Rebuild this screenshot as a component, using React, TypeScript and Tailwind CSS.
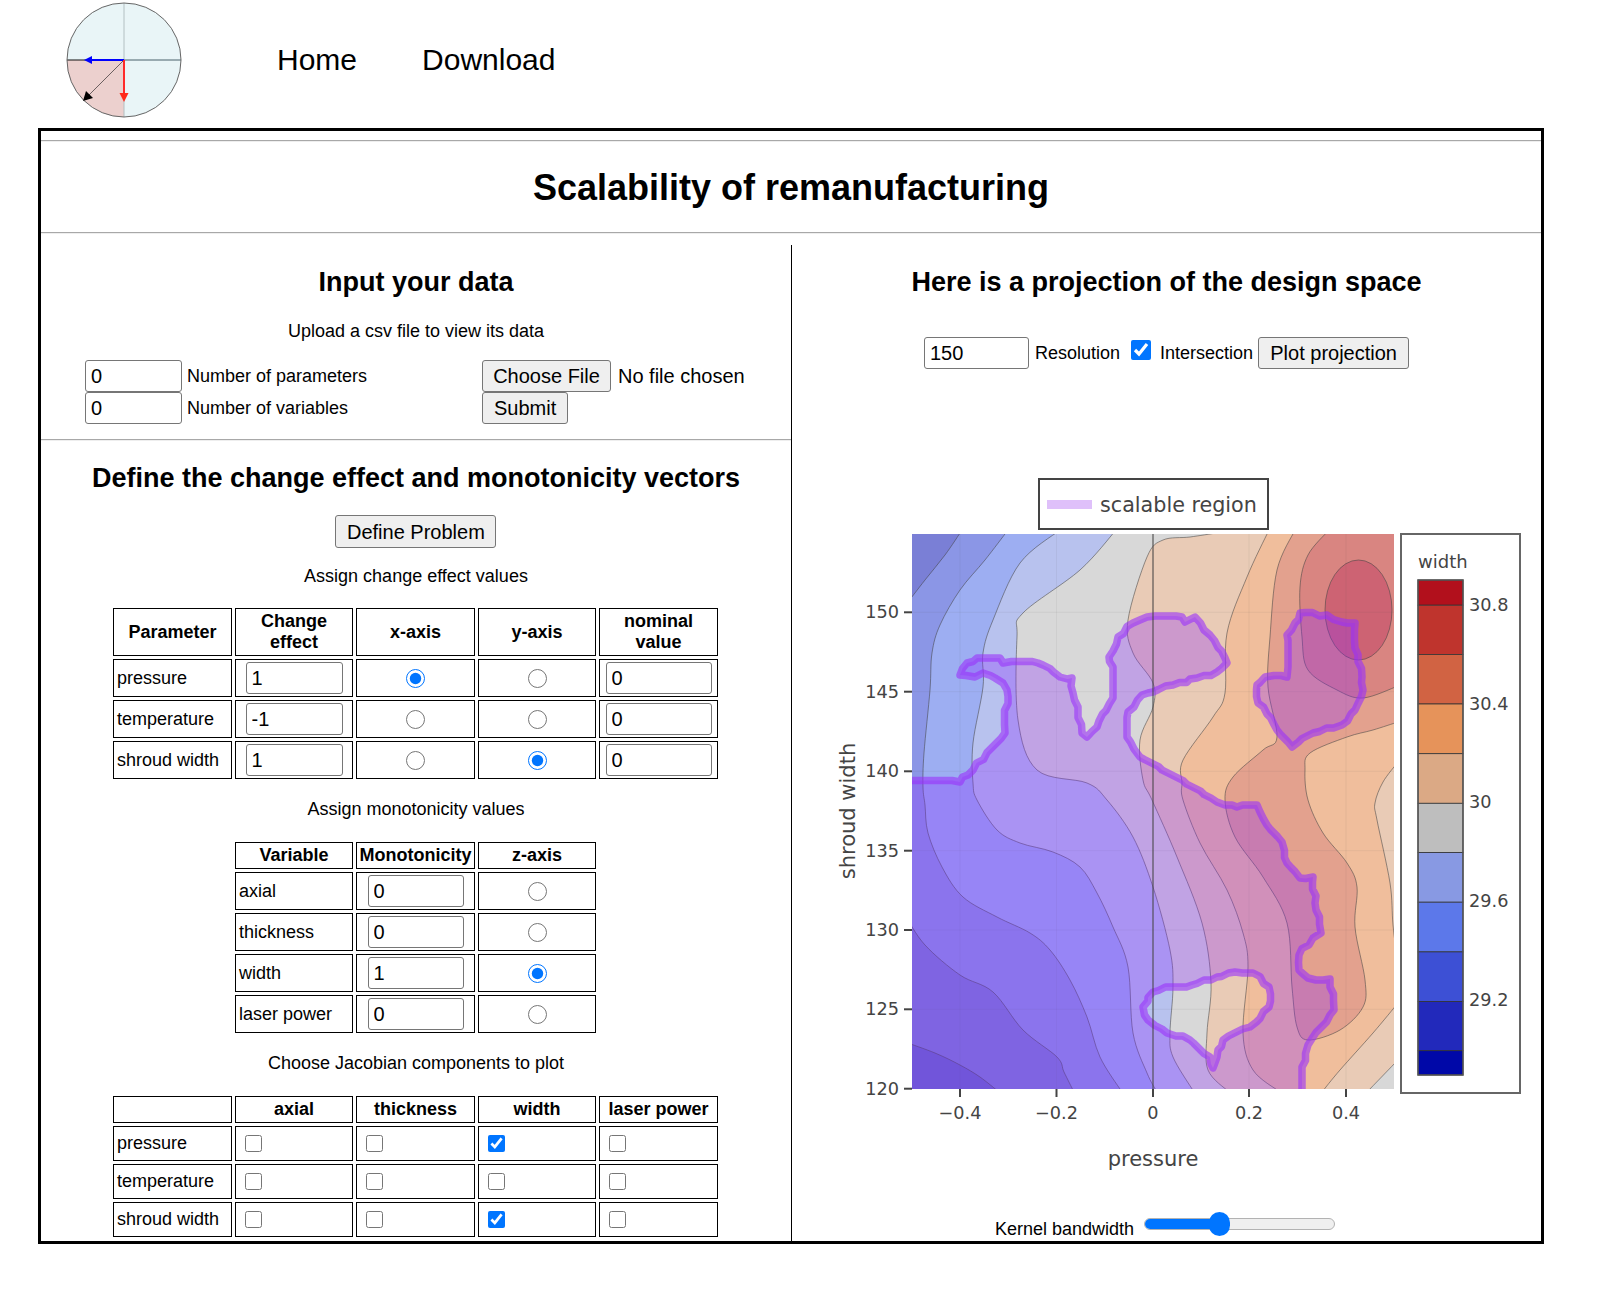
import React from "react";

type Pt = [number, number];

const inputCls = "block border border-[#767676] rounded-[3px] px-[5px] text-[20px] h-[32px] bg-white text-black";
const btnCls = "block border border-[#767676] rounded-[3px] bg-[#efefef] text-[20px] h-[32px] px-[11px] text-black whitespace-nowrap";
const thCls = "border border-black font-bold text-center leading-[21px] p-0";
const tdCls = "border border-black p-0 px-[3px]";

// smooth line through the points (catmull-rom)
function curve(p: Pt[], move = true) {
  let d = move ? `M${p[0][0]} ${p[0][1]}` : `L${p[0][0]} ${p[0][1]}`;
  for (let i = 0; i < p.length - 1; i++) {
    const a = p[Math.max(i - 1, 0)];
    const b = p[i];
    const c = p[i + 1];
    const e = p[Math.min(i + 2, p.length - 1)];
    const c1x = b[0] + (c[0] - a[0]) / 6;
    const c1y = b[1] + (c[1] - a[1]) / 6;
    const c2x = c[0] - (e[0] - b[0]) / 6;
    const c2y = c[1] - (e[1] - b[1]) / 6;
    d += ` C${c1x.toFixed(1)} ${c1y.toFixed(1)} ${c2x.toFixed(1)} ${c2y.toFixed(1)} ${c[0]} ${c[1]}`;
  }
  return d;
}

// the region outline comes from a coarse grid in the plot, so it steps a little
function rough(p: Pt[]) {
  const out: string[] = [];
  const grid = 3.5;
  for (let i = 0; i < p.length; i++) {
    const a = p[i];
    const b = p[(i + 1) % p.length];
    const n = Math.max(1, Math.round(Math.hypot(b[0] - a[0], b[1] - a[1]) / 7));
    for (let k = 0; k < n; k++) {
      const x = a[0] + ((b[0] - a[0]) * k) / n;
      const y = a[1] + ((b[1] - a[1]) * k) / n;
      const sx = k === 0 ? x : Math.round(x / grid) * grid;
      const sy = k === 0 ? y : Math.round(y / grid) * grid;
      out.push(`${sx.toFixed(1)} ${sy.toFixed(1)}`);
    }
  }
  return "M" + out.join(" L") + " Z";
}

const lineA: Pt[] = [[905, 1042], [935, 1053], [960, 1065], [980, 1077], [999, 1092]];
const lineB: Pt[] = [[905, 915], [925, 945], [960, 975], [993, 992], [1023, 1030], [1057, 1057], [1064, 1072], [1074, 1092]];
const lineC: Pt[] = [[905, 606], [925, 580], [945, 555], [962, 530]];
const lineD: Pt[] = [[1008, 530], [985, 560], [960, 590], [940, 625], [932, 653], [930, 690], [924, 753], [923, 787], [925, 805], [928, 833], [942, 867], [963, 897], [997, 917], [1030, 933], [1050, 950], [1070, 980], [1087, 1017], [1100, 1057], [1122, 1092]];
const lineE: Pt[] = [[1060, 530], [1020, 563], [993, 620], [983, 653], [983, 687], [973, 743], [973, 783], [977, 800], [997, 830], [1020, 843], [1053, 852], [1080, 867], [1097, 893], [1113, 927], [1128, 967], [1133, 1033], [1147, 1073], [1157, 1092]];
const lineF: Pt[] = [[1116, 530], [1080, 570], [1023, 613], [1017, 637], [1018, 720], [1037, 770], [1087, 783], [1107, 800], [1133, 837], [1153, 887], [1170, 950], [1173, 987], [1170, 1033], [1173, 1057], [1194, 1092]];
const lineG: Pt[] = [[1216, 533], [1190, 537], [1163, 540], [1147, 557], [1128, 620], [1133, 653], [1153, 683], [1153, 707], [1140, 740], [1143, 780], [1152, 800], [1177, 857], [1202, 923], [1211, 983], [1207, 1033], [1208, 1070], [1229, 1092]];
const lineH: Pt[] = [[1269, 530], [1247, 577], [1227, 633], [1225, 693], [1213, 717], [1183, 760], [1182, 783], [1183, 800], [1200, 843], [1227, 890], [1243, 933], [1248, 967], [1243, 1033], [1253, 1070], [1280, 1092]];
const lineI: Pt[] = [[1295, 530], [1277, 570], [1270, 637], [1268, 687], [1277, 737], [1263, 750], [1233, 777], [1225, 800], [1235, 837], [1263, 877], [1287, 923], [1292, 987], [1297, 1027], [1308, 1040], [1340, 1030], [1363, 1007], [1365, 980], [1355, 927], [1357, 887], [1347, 863], [1323, 833], [1308, 800], [1305, 770], [1310, 753], [1347, 737], [1373, 730], [1398, 722]];
const lineJ1: Pt[] = [[1398, 762], [1383, 782], [1375, 803], [1377, 820], [1390, 883], [1393, 925], [1398, 965]];
const lineJ2: Pt[] = [[1398, 1003], [1373, 1033], [1340, 1070], [1322, 1092]];
const lineK: Pt[] = [[1329, 530], [1308, 555], [1300, 587], [1302, 637], [1308, 670], [1337, 690], [1363, 698], [1398, 686]];
const corner: Pt[] = [[1367, 1092], [1398, 1060]];

const outer: Pt[] = [[900, 782], [960, 782], [968, 775], [1005, 733], [1007, 690], [1003, 683], [995, 678], [983, 673], [975, 677], [960, 675], [967, 663], [977, 658], [1000, 658], [1003, 663], [1038, 663], [1060, 677], [1072, 678], [1073, 693], [1078, 712], [1082, 733], [1087, 737], [1097, 727], [1113, 698], [1113, 667], [1109, 657], [1118, 637], [1133, 623], [1147, 617], [1182, 617], [1185, 622], [1195, 617], [1210, 635], [1227, 663], [1217, 672], [1197, 678], [1173, 685], [1153, 692], [1142, 695], [1128, 712], [1127, 737], [1140, 757], [1217, 802], [1237, 807], [1257, 805], [1260, 812], [1267, 825], [1282, 842], [1287, 863], [1300, 878], [1313, 877], [1315, 903], [1321, 933], [1313, 938], [1299, 955], [1299, 970], [1308, 978], [1330, 979], [1334, 1010], [1313, 1037], [1308, 1045], [1302, 1067], [1302, 1100], [900, 1100]];
const island: Pt[] = [[1300, 613], [1327, 615], [1342, 622], [1355, 623], [1355, 648], [1362, 677], [1363, 690], [1355, 710], [1342, 725], [1313, 733], [1292, 747], [1277, 730], [1258, 703], [1257, 685], [1265, 677], [1287, 677], [1288, 667], [1287, 635]];
const hole: Pt[] = [[1143, 1007], [1153, 992], [1172, 987], [1192, 985], [1217, 977], [1235, 972], [1253, 973], [1269, 987], [1269, 1007], [1250, 1027], [1223, 1040], [1217, 1057], [1213, 1068], [1210, 1057], [1190, 1040], [1167, 1033], [1148, 1020]];

const scale = ["#b2101c", "#bf342d", "#d16343", "#e6935a", "#dba985", "#bebebe", "#8899e3", "#5c78ea", "#3d50d5", "#2229bb", "#0008a8"];
const edges = [580, 605.2, 654.4, 704, 753.7, 803.3, 852.6, 902.2, 951.9, 1001.5, 1050.7, 1075];

function Plot() {
  const rightOf = (l: Pt[]) => curve(l) + " L1400 1100 L1400 525 Z";
  const contours = [lineA, lineB, lineC, lineD, lineE, lineF, lineG, lineH, lineI, lineJ1, lineJ2, lineK, corner];
  return (
    <svg viewBox="792 470 749 720" width={749} height={720} className="block font-['DejaVu_Sans',sans-serif]">
      <defs>
        <clipPath id="plotArea">
          <rect x={912} y={534} width={482} height={555} />
        </clipPath>
      </defs>
      <rect x={1039} y={479} width={229} height={50} fill="#fff" stroke="#444" strokeWidth={2} />
      <rect x={1047} y={500} width={45} height={9} fill="#dfc0fa" />
      <text x={1100} y={512} fontSize={20.7} fill="#444">scalable region</text>

      <g clipPath="url(#plotArea)">
        <rect x={912} y={534} width={482} height={555} fill="#8b96e6" />
        <path d={curve(lineC) + " L900 520 Z"} fill="#7a7fd6" />
        <path d={curve(lineB) + " L900 1100 Z"} fill="#7a7fd6" />
        <path d={curve(lineA) + " L900 1100 Z"} fill="#6669cb" />
        <path d={rightOf(lineD)} fill="#9daef2" />
        <path d={rightOf(lineE)} fill="#b8c2ee" />
        <path d={rightOf(lineF)} fill="#d8d8d8" />
        <path d={rightOf(lineG)} fill="#e9cbb6" />
        <path d={rightOf(lineH)} fill="#f0be9c" />
        <path d={curve(lineI) + " L1400 525 Z"} fill="#e3a18e" />
        <path d={curve(lineJ1) + " L1400 965 L1400 762 Z"} fill="#e9cbb6" />
        <path d={curve(lineJ2) + " L1400 1100 L1400 1003 Z"} fill="#e9cbb6" />
        <path d={curve(corner) + " L1400 1100 Z"} fill="#d8d8d8" />
        <path d={curve(lineK) + " L1400 525 Z"} fill="#d98581" />
        <ellipse cx={1358.5} cy={610} rx={33.5} ry={50} fill="#cd6373" stroke="#444" strokeOpacity={0.55} />
        {contours.map((l, i) => (
          <path key={i} d={curve(l)} fill="none" stroke="#444" strokeOpacity={0.55} strokeWidth={1} />
        ))}
        {[960, 1056.5, 1249, 1346].map((x) => (
          <line key={x} x1={x} x2={x} y1={534} y2={1089} stroke="#555" strokeOpacity={0.08} />
        ))}
        {[612.3, 691.7, 771.3, 850.7, 930, 1009.3].map((y) => (
          <line key={y} x1={912} x2={1394} y1={y} y2={y} stroke="#555" strokeOpacity={0.08} />
        ))}
        <path d={rough(outer) + " " + rough(hole)} fillRule="evenodd" fill="#8c28ff" fillOpacity={0.3} stroke="#9a30fa" strokeOpacity={0.6} strokeWidth={7.5} strokeLinejoin="round" />
        <path d={rough(island)} fill="#8c28ff" fillOpacity={0.3} stroke="#9a30fa" strokeOpacity={0.6} strokeWidth={7.5} strokeLinejoin="round" />
        <line x1={1153} x2={1153} y1={534} y2={1089} stroke="#444" strokeOpacity={0.7} strokeWidth={1.5} />
      </g>

      {[[612.3, "150"], [691.7, "145"], [771.3, "140"], [850.7, "135"], [930, "130"], [1009.3, "125"], [1088.7, "120"]].map(([y, t]) => (
        <g key={t as string}>
          <line x1={904} x2={912} y1={y as number} y2={y as number} stroke="#444" strokeWidth={2} />
          <text x={899} y={(y as number) + 6} textAnchor="end" fontSize={17.7} fill="#444">{t}</text>
        </g>
      ))}
      {[[960, "−0.4"], [1056.5, "−0.2"], [1153, "0"], [1249, "0.2"], [1346, "0.4"]].map(([x, t]) => (
        <g key={t as string}>
          <line x1={x as number} x2={x as number} y1={1089} y2={1097} stroke="#444" strokeWidth={2} />
          <text x={x as number} y={1119} textAnchor="middle" fontSize={17.7} fill="#444">{t}</text>
        </g>
      ))}
      <text x={1153} y={1166} textAnchor="middle" fontSize={21} fill="#444">pressure</text>
      <text transform="translate(855 811) rotate(-90)" textAnchor="middle" fontSize={21} fill="#444">shroud width</text>

      <rect x={1401} y={534} width={119} height={559} fill="#fff" stroke="#666" strokeWidth={2} />
      <text x={1418} y={568} fontSize={18} fill="#444">width</text>
      {scale.map((c, i) => (
        <rect key={c} x={1418} y={edges[i]} width={45} height={edges[i + 1] - edges[i]} fill={c} stroke="#333" strokeWidth={0.8} />
      ))}
      <rect x={1418} y={580} width={45} height={495} fill="none" stroke="#555" strokeWidth={1.5} />
      {[[605, "30.8"], [703.7, "30.4"], [802.4, "30"], [901, "29.6"], [999.7, "29.2"]].map(([y, t]) => (
        <text key={t as string} x={1469} y={(y as number) + 6} fontSize={17.7} fill="#444">{t}</text>
      ))}
    </svg>
  );
}

function Logo() {
  return (
    <svg width={116} height={116} viewBox="66 2 116 116" className="block mt-[2px]">
      <circle cx={124} cy={60} r={57} fill="#e9f5f7" />
      <path d="M124 60 L67 60 A57 57 0 0 0 124 117 Z" fill="#ecd0ce" />
      <line x1={124} y1={3} x2={124} y2={117} stroke="#b3c0c2" />
      <line x1={124} y1={60} x2={181} y2={60} stroke="#48606a" />
      <line x1={67} y1={60} x2={90} y2={60} stroke="#111" />
      <circle cx={124} cy={60} r={57} fill="none" stroke="#666" />
      <line x1={124} y1={60} x2={88} y2={96} stroke="#6b5f5f" />
      <path d="M83 101 L86 91 L93 98 Z" fill="#000" />
      <line x1={124} y1={60} x2={92} y2={60} stroke="#0000ff" strokeWidth={2} />
      <path d="M84 60 L92 56 L92 64 Z" fill="#0000ff" />
      <line x1={124} y1={60} x2={124} y2={93} stroke="#ff2a2a" strokeWidth={2} />
      <path d="M124 102 L119.5 93 L128.5 93 Z" fill="#ff2a1a" />
    </svg>
  );
}

function Radio({ name, checked }: { name: string; checked?: boolean }) {
  return (
    <td className={tdCls + " text-center"}>
      <input type="radio" name={name} defaultChecked={checked} className="inline-block align-middle m-0 w-[19px] h-[19px]" />
    </td>
  );
}

function Num({ value, w }: { value: string; w: string }) {
  return (
    <td className={tdCls}>
      <input type="text" defaultValue={value} className={inputCls + " mx-auto " + w} />
    </td>
  );
}

function Check({ checked }: { checked?: boolean }) {
  return (
    <td className={tdCls + " pl-[9px]"}>
      <input type="checkbox" defaultChecked={checked} className="block m-0 w-[17px] h-[17px]" />
    </td>
  );
}

const tableCls = "border-separate border-spacing-[3px] table-fixed";

export default function App() {
  return (
    <div className="bg-white text-black text-[18px] font-['Liberation_Sans',Arial,sans-serif]">
      <header className="flex h-[128px] pl-[66px]">
        <Logo />
        <nav className="flex gap-[65px] ml-[95px] mt-[43px] text-[30px] leading-[34px] h-fit">
          <a>Home</a>
          <a>Download</a>
        </nav>
      </header>

      <main className="ml-[38px] w-[1506px] h-[1116px] border-[3px] border-black overflow-hidden">
        <hr className="mt-[9px] border-t border-b border-t-[#a8a8a8] border-b-[#eee]" />
        <h1 className="text-center font-bold text-[36px] leading-[42px] mt-[25px]">Scalability of remanufacturing</h1>
        <hr className="mt-[23px] border-t border-b border-t-[#a8a8a8] border-b-[#eee]" />

        <div className="grid grid-cols-[750px_1fr] min-h-[1020px]">
          <section>
            <h3 className="mt-[33px] text-center font-bold text-[27px] leading-[30px]">Input your data</h3>
            <p className="mt-[24px] text-center leading-[20px]">Upload a csv file to view its data</p>
            <div className="mt-[19px] flex">
              <div className="ml-[44px] w-[397px]">
                <div className="flex items-center h-[32px]">
                  <input type="text" defaultValue="0" className={inputCls + " w-[97px]"} />
                  <span className="ml-[5px] mt-[1px]">Number of parameters</span>
                </div>
                <div className="flex items-center h-[32px]">
                  <input type="text" defaultValue="0" className={inputCls + " w-[97px]"} />
                  <span className="ml-[5px] mt-[1px]">Number of variables</span>
                </div>
              </div>
              <div>
                <input type="file" className="block h-[32px] w-[280px] text-[20px] file:h-[32px] file:w-[129px] file:mr-[7px] file:border file:border-[#767676] file:rounded-[3px] file:bg-[#efefef] file:text-[20px] file:text-black" />
                <button className={btnCls}>Submit</button>
              </div>
            </div>
            <hr className="mt-[15px] border-t border-b border-t-[#a8a8a8] border-b-[#eee]" />

            <h3 className="mt-[22px] text-center font-bold text-[27px] leading-[30px]">Define the change effect and monotonicity vectors</h3>
            <button className={btnCls + " mt-[22px] ml-[294px] w-[161px] h-[33px] px-0"}>Define Problem</button>
            <p className="mt-[18px] text-center leading-[20px]">Assign change effect values</p>
            <table className={tableCls + " mt-[19px] ml-[69px]"}>
              <thead>
                <tr className="h-[48px]">
                  <th className={thCls + " w-[119px]"}>Parameter</th>
                  <th className={thCls + " w-[118px]"}>Change<br />effect</th>
                  <th className={thCls + " w-[119px]"}>x-axis</th>
                  <th className={thCls + " w-[118px]"}>y-axis</th>
                  <th className={thCls + " w-[119px]"}>nominal<br />value</th>
                </tr>
              </thead>
              <tbody>
                <tr className="h-[38px]">
                  <td className={tdCls}>pressure</td>
                  <Num value="1" w="w-[97px]" />
                  <Radio name="x1" checked />
                  <Radio name="y1" />
                  <Num value="0" w="w-[106px]" />
                </tr>
                <tr className="h-[38px]">
                  <td className={tdCls}>temperature</td>
                  <Num value="-1" w="w-[97px]" />
                  <Radio name="x2" />
                  <Radio name="y2" />
                  <Num value="0" w="w-[106px]" />
                </tr>
                <tr className="h-[38px]">
                  <td className={tdCls}>shroud width</td>
                  <Num value="1" w="w-[97px]" />
                  <Radio name="x3" />
                  <Radio name="y3" checked />
                  <Num value="0" w="w-[106px]" />
                </tr>
              </tbody>
            </table>

            <p className="mt-[17px] text-center leading-[20px]">Assign monotonicity values</p>
            <table className={tableCls + " mt-[20px] ml-[191px]"}>
              <thead>
                <tr className="h-[27px]">
                  <th className={thCls + " w-[118px]"}>Variable</th>
                  <th className={thCls + " w-[119px]"}>Monotonicity</th>
                  <th className={thCls + " w-[118px]"}>z-axis</th>
                </tr>
              </thead>
              <tbody>
                {[["axial", "0", false], ["thickness", "0", false], ["width", "1", true], ["laser power", "0", false]].map(([n, v, c]) => (
                  <tr key={n as string} className="h-[38px]">
                    <td className={tdCls}>{n}</td>
                    <Num value={v as string} w="w-[96px]" />
                    <Radio name={"z" + n} checked={c as boolean} />
                  </tr>
                ))}
              </tbody>
            </table>

            <p className="mt-[17px] text-center leading-[20px]">Choose Jacobian components to plot</p>
            <table className={tableCls + " mt-[20px] ml-[69px]"}>
              <thead>
                <tr className="h-[27px]">
                  <th className={thCls + " w-[119px]"}></th>
                  <th className={thCls + " w-[118px]"}>axial</th>
                  <th className={thCls + " w-[119px]"}>thickness</th>
                  <th className={thCls + " w-[118px]"}>width</th>
                  <th className={thCls + " w-[119px]"}>laser power</th>
                </tr>
              </thead>
              <tbody>
                <tr className="h-[35px]">
                  <td className={tdCls}>pressure</td>
                  <Check /><Check /><Check checked /><Check />
                </tr>
                <tr className="h-[35px]">
                  <td className={tdCls}>temperature</td>
                  <Check /><Check /><Check /><Check />
                </tr>
                <tr className="h-[35px]">
                  <td className={tdCls}>shroud width</td>
                  <Check /><Check /><Check checked /><Check />
                </tr>
              </tbody>
            </table>
          </section>

          <section className="mt-[11px] border-l border-black">
            <h3 className="mt-[22px] text-center font-bold text-[27px] leading-[30px]">Here is a projection of the design space</h3>
            <div className="mt-[40px] flex items-center h-[32px] pl-[132px]">
              <input type="text" defaultValue="150" className={inputCls + " w-[105px]"} />
              <span className="ml-[6px] mt-[1px]">Resolution</span>
              <input type="checkbox" defaultChecked className="ml-[11px] mb-[6px] w-[20px] h-[20px]" />
              <span className="ml-[9px] mt-[1px]">Intersection</span>
              <button className={btnCls + " ml-[5px] w-[151px] px-0"}>Plot projection</button>
            </div>
            <div className="mt-[101px]">
              <Plot />
            </div>
            <div className="mt-[22px] flex items-start pl-[203px]">
              <span className="mt-[7px] leading-[20px]">Kernel bandwidth</span>
              <div className="relative ml-[10px] h-[24px] w-[191px] flex items-center">
                <div className="w-full h-[12px] rounded-full bg-[#efefef] border border-[#b2b2b2] overflow-hidden">
                  <div className="h-full w-[76px] bg-[#0075ff]" />
                </div>
                <div className="absolute left-[65px] top-0 w-[21px] h-[24px] rounded-full bg-[#0075ff]" />
              </div>
            </div>
          </section>
        </div>
      </main>
    </div>
  );
}
